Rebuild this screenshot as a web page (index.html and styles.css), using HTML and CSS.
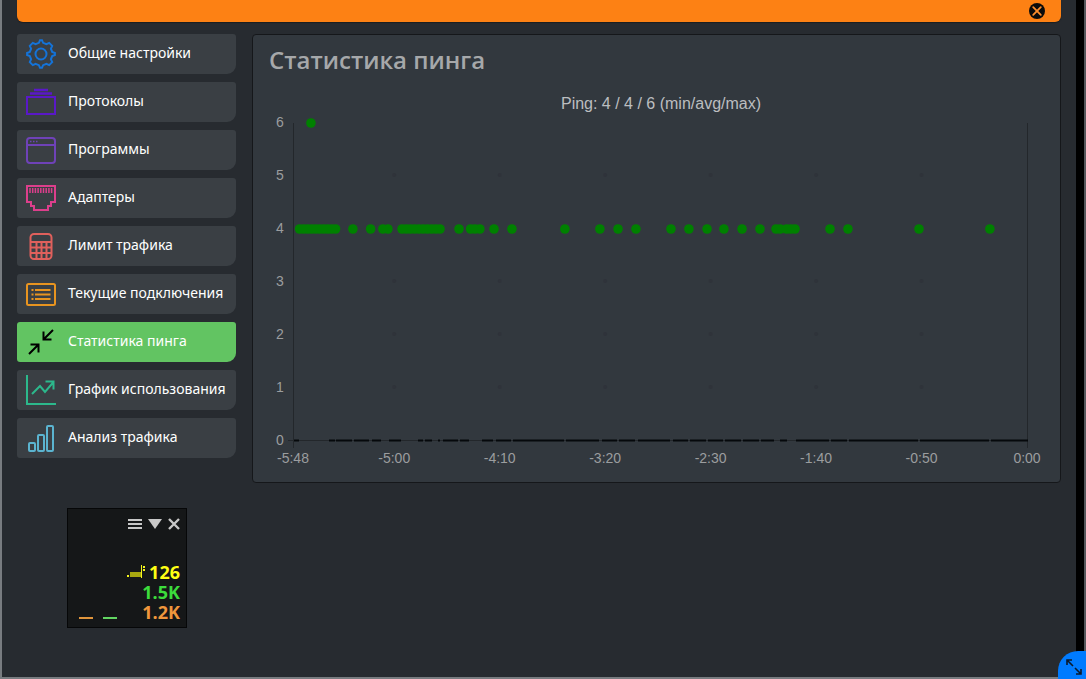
FILE: index.html
```html
<!DOCTYPE html>
<html lang="ru">
<head>
  <meta charset="UTF-8">
  <meta name="viewport" content="width=device-width, initial-scale=1.0">
  <title>Статистика пинга</title>
  <link rel="stylesheet" href="styles.css">
</head>
<body>

  <div class="window">
    <div class="banner">
      <button class="banner-close" aria-label="Закрыть">
        <svg width="16" height="16" viewBox="0 0 16 16"><circle cx="8" cy="8" r="8" fill="#0b0b0b"/><path d="M4.2 4.2l7.600 7.600M11.800 4.200l-7.600 7.600" stroke="#fd8d2c" stroke-width="1.800" stroke-linecap="round"/></svg>
      </button>
    </div>

    <div class="layout">
      <nav class="menu">
        <button class="menu-item blue">
          <svg class="icon" viewBox="0 0 30 30"><circle cx="15" cy="15" r="5.5"/><path d="M12.9 3.8L14 1.2h2l1.1 2.6 3.3 1.4 2.8-1.3 3 3-1.3 2.8 1.3 3.2 2.7 1.1v2l-2.7 1.1-1.3 3.2 1.3 2.8-3 3-2.8-1.3-3.3 1.4-1.1 2.6h-2l-1.1-2.6-3.3-1.4-2.8 1.3-3-3 1.3-2.8-1.3-3.2L1.1 16v-2l2.7-1.1 1.3-3.2-1.3-2.8 3-3 2.8 1.3z"/></svg>
          <span>Общие настройки</span>
        </button>
        <button class="menu-item indigo">
          <svg class="icon" viewBox="0 0 30 30"><path d="M1 10h28v17H1z"/><path d="M4 6.500h22M8 3h14" stroke-width="2.400"/></svg>
          <span>Протоколы</span>
        </button>
        <button class="menu-item purple">
          <svg class="icon" viewBox="0 0 30 30"><rect x="1" y="3" width="28" height="25" rx="3"/><path d="M1 10h28"/><path d="M4 6.500h1.500M7 6.500h1.500M10 6.500h1.500" stroke-width="1.500"/></svg>
          <span>Программы</span>
        </button>
        <button class="menu-item pink">
          <svg class="icon" viewBox="0 0 30 30"><path d="M1 3h28v16h-4v4h-3v4H8v-4H5v-4H1z"/><path d="M4 5v5M6.700 5v5M9.400 5v5M12.100 5v5M14.800 5v5M17.500 5v5M20.200 5v5M22.900 5v5M25.600 5v5" stroke-width="1.500"/></svg>
          <span>Адаптеры</span>
        </button>
        <button class="menu-item red">
          <svg class="icon" viewBox="0 0 30 30"><rect x="4.500" y="3" width="21" height="25" rx="3.500"/><path d="M5 11h20M5 16.500h20M5 22h20M10.500 11v17M15.500 11v17M20.500 11v17"/></svg>
          <span>Лимит трафика</span>
        </button>
        <button class="menu-item orange">
          <svg class="icon" viewBox="0 0 30 30"><rect x="1" y="5" width="28" height="21" rx="1.500"/><path d="M9 11h15.500M9 15.500h15.500M9 20h15.500M5.500 11h2M5.500 15.500h2M5.500 20h2" stroke-width="1.800"/></svg>
          <span>Текущие подключения</span>
        </button>
        <button class="menu-item active">
          <svg class="icon" viewBox="0 0 30 30"><path d="M27 3l-9 9M17.500 4.500V12.500H25.500M3 27l9-9M4.500 17.500h8v8"/></svg>
          <span>Статистика пинга</span>
        </button>
        <button class="menu-item teal">
          <svg class="icon" viewBox="0 0 30 30"><path d="M1 0v29h29"/><path d="M6 19l8-8 5 6L27.500 7M19.500 6.500h8v8"/></svg>
          <span>График использования</span>
        </button>
        <button class="menu-item cyan">
          <svg class="icon" viewBox="0 0 30 30"><rect x="3" y="20" width="6" height="8" rx="1"/><rect x="12" y="12" width="6" height="16" rx="1"/><rect x="21" y="3" width="6" height="25" rx="1"/></svg>
          <span>Анализ трафика</span>
        </button>
      </nav>

      <main class="card">
        <h1>Статистика пинга</h1>
        <svg class="chart" id="chart" viewBox="0 0 775 384" role="img" aria-label="Ping">
          <text class="chart-title" x="392" y="21">Ping: 4 / 4 / 6 (min/avg/max)</text>
          <path class="axis" d="M24.500 35v325M758.500 35v325M19 352.500h740"/>
          <path class="timeouts" d="M25 352.500h5M60 352.500h6M67 352.500h16M85 352.500h15M103 352.500h9M120 352.500h12M149 352.500h5M156 352.500h7M169 352.500h2M174 352.500h15M191 352.500h9M213 352.500h11M227 352.500h15M244 352.500h51M297 352.500h33M333 352.500h15M350 352.500h16M369 352.500h32M404 352.500h15M421 352.500h16M439 352.500h15M456 352.500h16M474 352.500h16M492 352.500h13M511 352.500h7M527 352.500h33M562 352.500h16M580 352.500h69M651 352.500h69M722 352.500h37"/>
        </svg>
      </main>
    </div>

    <section class="widget">
      <div class="widget-bar">
        <button aria-label="Меню"><svg width="14" height="12" viewBox="0 0 14 12"><path d="M0 2h14M0 6h14M0 10h14" stroke="#c8c8c8" stroke-width="2"/></svg></button>
        <button aria-label="Свернуть"><svg width="14" height="12" viewBox="0 0 14 12"><path d="M0 1h14L7 11z" fill="#c8c8c8"/></svg></button>
        <button aria-label="Закрыть"><svg width="12" height="12" viewBox="0 0 12 12"><path d="M1 1l10 10M11 1L1 11" stroke="#c8c8c8" stroke-width="2.400"/></svg></button>
      </div>
      <div class="widget-body">
        <div class="levels">
          <span class="level out"></span>
          <span class="level in"></span>
        </div>
        <div class="values">
          <div class="value ping">
            <svg width="18" height="14" viewBox="0 0 18 14"><path d="M0 10h2v2H0zM14 0h1v13h-1zM16 1h2v2h-2zM16 4h2v2h-2z" fill="#f4f41c"/><path d="M3 7h11v5H3z" fill="#a8a810"/></svg>
            126
          </div>
          <div class="value in">1.5K</div>
          <div class="value out">1.2K</div>
        </div>
      </div>
    </section>
  </div>

  <button class="resize" aria-label="Развернуть">
    <svg width="16" height="16" viewBox="0 0 16 16"><path d="M1 6V1h5M1 1l6 6M15 10v5h-5M15 15L9 9" fill="none" stroke="#0a1a2c" stroke-width="1.600"/></svg>
  </button>

  <script>
    const chart = document.getElementById('chart');
    const left = 24, right = 758, bottom = 352, unit = 53, span = 348;

    function add(name, attrs, text) {
      const el = document.createElementNS('http://www.w3.org/2000/svg', name);
      for (const key in attrs) el.setAttribute(key, attrs[key]);
      if (text) el.textContent = text;
      chart.appendChild(el);
    }

    const xAt = sec => right - sec * (right - left) / span;
    const yAt = ms => bottom - ms * unit;

    const ticks = [348, 300, 250, 200, 150, 100, 50, 0];
    ticks.forEach(sec => {
      const label = (sec ? '-' : '') + Math.floor(sec / 60) + ':' + String(sec % 60).padStart(2, '0');
      add('text', { class: 'tick', x: xAt(sec), y: 375 }, label);
    });

    for (let ms = 0; ms <= 6; ms++) {
      add('text', { class: 'tick', x: 11, y: yAt(ms) + 5 }, String(ms));
      if (ms === 0 || ms === 4 || ms === 6) continue;
      ticks.slice(1, -1).forEach(sec => add('circle', { class: 'cross', cx: xAt(sec), cy: yAt(ms), r: 2 }));
    }

    // seconds ago for every answer of 4 ms
    const pings = [17.6, 51.2, 84.9, 93.4, 110, 112, 114, 117, 119, 126.6, 135.1, 143.7, 151.7, 160.3, 168.8,
      185.4, 193.9, 202.5, 219.1, 244.2, 252.7, 259.4, 261.7, 263.8, 269.3, 303, 305.4, 311.2, 319.6];
    for (let s = 278.3; s < 297; s += 2) pings.push(s);
    for (let s = 327.8; s < 345.5; s += 1.9) pings.push(s);
    pings.forEach(s => add('circle', { class: 'dot', cx: xAt(s), cy: yAt(4) + 1, r: 4.8 }));
    add('circle', { class: 'dot', cx: xAt(339.5), cy: yAt(6) + 1, r: 4.8 });
  </script>

</body>
</html>
```

FILE: styles.css
```css
* {
  box-sizing: border-box;
}

body {
  margin: 0;
  background: #272b30;
  color: #fff;
  font-family: "Noto Sans", "Open Sans", sans-serif;
  font-size: 14px;
  border-left: 2px solid #787c80;
  border-bottom: 2px solid #787c80;
  border-right: 2px solid #55585c;
}

button {
  padding: 0;
  border: none;
  background: none;
  color: inherit;
  font: inherit;
  cursor: pointer;
}

svg {
  display: block;
}

.window {
  min-height: calc(100vh - 2px);
  padding: 0 15px;
  border-right: 8px solid #000;
}

.banner {
  display: flex;
  justify-content: flex-end;
  align-items: flex-end;
  height: 22px;
  padding: 0 16px 3px;
  background: #fd8114;
  border-radius: 0 0 6px 6px;
  box-shadow: 0 1px 1px #1c1e21;
}

.layout {
  display: flex;
  align-items: flex-start;
  gap: 16px;
  margin-top: 12px;
}

.menu {
  display: flex;
  flex-direction: column;
  gap: 8px;
  width: 219px;
  flex-shrink: 0;
}

.menu-item {
  display: flex;
  align-items: center;
  gap: 12px;
  height: 40px;
  padding: 0 0 0 9px;
  background: #3a3f44;
  border-radius: 3px 3px 9px 3px;
  text-align: left;
  white-space: nowrap;
}

.menu-item span {
  padding-bottom: 4px;
}

.menu-item.active {
  background: #62c462;
}

.icon {
  width: 30px;
  height: 30px;
  flex-shrink: 0;
  fill: none;
  stroke: currentColor;
  stroke-width: 2;
}

.blue .icon { color: #1473d8; }
.indigo .icon { color: #5a18c8; }
.purple .icon { color: #6f42b8; }
.pink .icon { color: #dc3f8c; }
.red .icon { color: #e0605c; }
.orange .icon { color: #e89420; }
.active .icon { color: #000; }
.teal .icon { color: #2cb88c; }
.cyan .icon { color: #5bb4d0; }

.card {
  flex: 1;
  min-width: 0;
  padding: 10px 16px;
  background: #32383e;
  border: 1px solid #15171a;
  border-radius: 4px;
}

h1 {
  margin: 0 0 13px;
  color: #a6a8aa;
  font-family: "Open Sans", "Noto Sans", sans-serif;
  font-size: 24px;
  font-weight: 600;
  line-height: 30px;
}

.chart {
  width: 100%;
  height: auto;
  font-family: "Liberation Sans", Arial, sans-serif;
}

.chart-title {
  fill: #bcbec0;
  font-size: 16px;
  text-anchor: middle;
}

.tick {
  fill: #9b9d9f;
  font-size: 14px;
  text-anchor: middle;
}

.axis {
  fill: none;
  stroke: #23272b;
}

.timeouts {
  stroke: #05080b;
  stroke-width: 2;
}

.cross {
  fill: #2f333a;
}

.dot {
  fill: #008000;
}

.widget {
  display: flex;
  flex-direction: column;
  justify-content: space-between;
  width: 120px;
  height: 120px;
  margin: 25px 0 0 50px;
  padding: 9px 6px 5px 11px;
  background: #151718;
  border: 1px solid #060708;
}

.widget-bar {
  display: flex;
  justify-content: flex-end;
  gap: 6px;
}

.widget-body {
  display: flex;
  justify-content: space-between;
  align-items: flex-end;
}

.levels {
  display: flex;
  gap: 10px;
  padding-bottom: 3px;
}

.level {
  width: 14px;
  height: 2px;
}

.level.out { background: #e0953c; }
.level.in { background: #62d662; }

.values {
  margin-left: -40px;
}

.value {
  display: flex;
  justify-content: flex-end;
  align-items: center;
  gap: 4px;
  font-family: "Open Sans", "Noto Sans", sans-serif;
  font-size: 18px;
  font-weight: 700;
  line-height: 20px;
}

.value.ping { color: #ffff14; }
.value.in { color: #3cdc3c; }
.value.out { color: #f0963c; }

.resize {
  position: fixed;
  right: 0;
  bottom: 0;
  display: flex;
  justify-content: center;
  align-items: center;
  width: 28px;
  height: 28px;
  padding: 3px 0 0 3px;
  background: #007bff;
  border-radius: 20px 0 0 0;
}
```
